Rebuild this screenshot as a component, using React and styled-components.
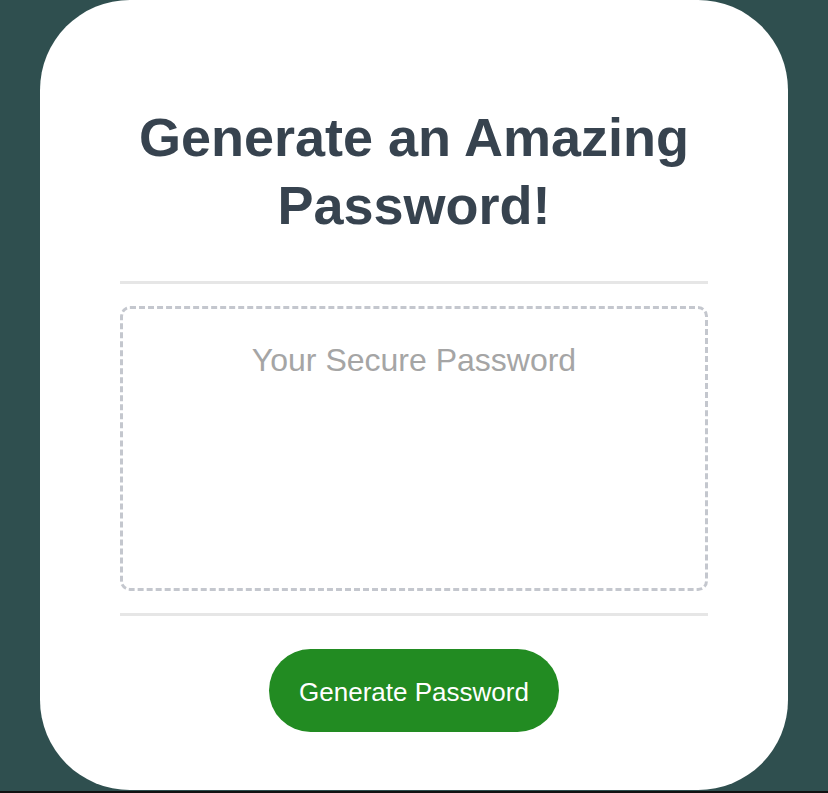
import React from 'react';
import styled, { createGlobalStyle } from 'styled-components';

const GlobalStyle = createGlobalStyle`
  html {
    background: #111;
  }
  body {
    margin: 0;
    font-family: "Liberation Sans", Arial, sans-serif;
  }
`;

const App = () => (
  <>
    <GlobalStyle />
    <Page>
      <Card>
        <Title>Generate an Amazing Password!</Title>
        <Rule />
        <PasswordBox>
          <Placeholder>Your Secure Password</Placeholder>
        </PasswordBox>
        <Rule />
        <Footer>
          <GenerateButton type="button">Generate Password</GenerateButton>
        </Footer>
      </Card>
    </Page>
  </>
);

const Page = styled.div`
  background: #2f4f4f;
  height: 791px;
  padding: 0 40px;
  box-sizing: border-box;
`;

const Card = styled.div`
  background: #fff;
  height: 790px;
  border-radius: 90px;
  padding: 103px 80px 0;
  box-sizing: border-box;
  display: flex;
  flex-direction: column;
`;

const Title = styled.h1`
  margin: 0 0 42px;
  text-align: center;
  font-size: 54px;
  line-height: 68px;
  font-weight: 700;
  color: #37434f;
`;

const Rule = styled.div`
  height: 3px;
  background: #e6e6e6;
`;

const PasswordBox = styled.div`
  margin: 22px 0;
  height: 285px;
  box-sizing: border-box;
  border: 3px dashed #c4c7ce;
  border-radius: 10px;
  padding-top: 33px;
  text-align: center;
`;

const Placeholder = styled.span`
  font-size: 32px;
  color: #a5a5a5;
`;

const Footer = styled.div`
  display: flex;
  justify-content: center;
  padding-top: 33px;
`;

const GenerateButton = styled.button`
  width: 290px;
  height: 83px;
  border: none;
  border-radius: 42px;
  background: #228b22;
  color: #fff;
  font-family: "Liberation Sans", Arial, sans-serif;
  font-size: 26px;
  padding: 4px 0 0;
  cursor: pointer;
`;

export default App;
